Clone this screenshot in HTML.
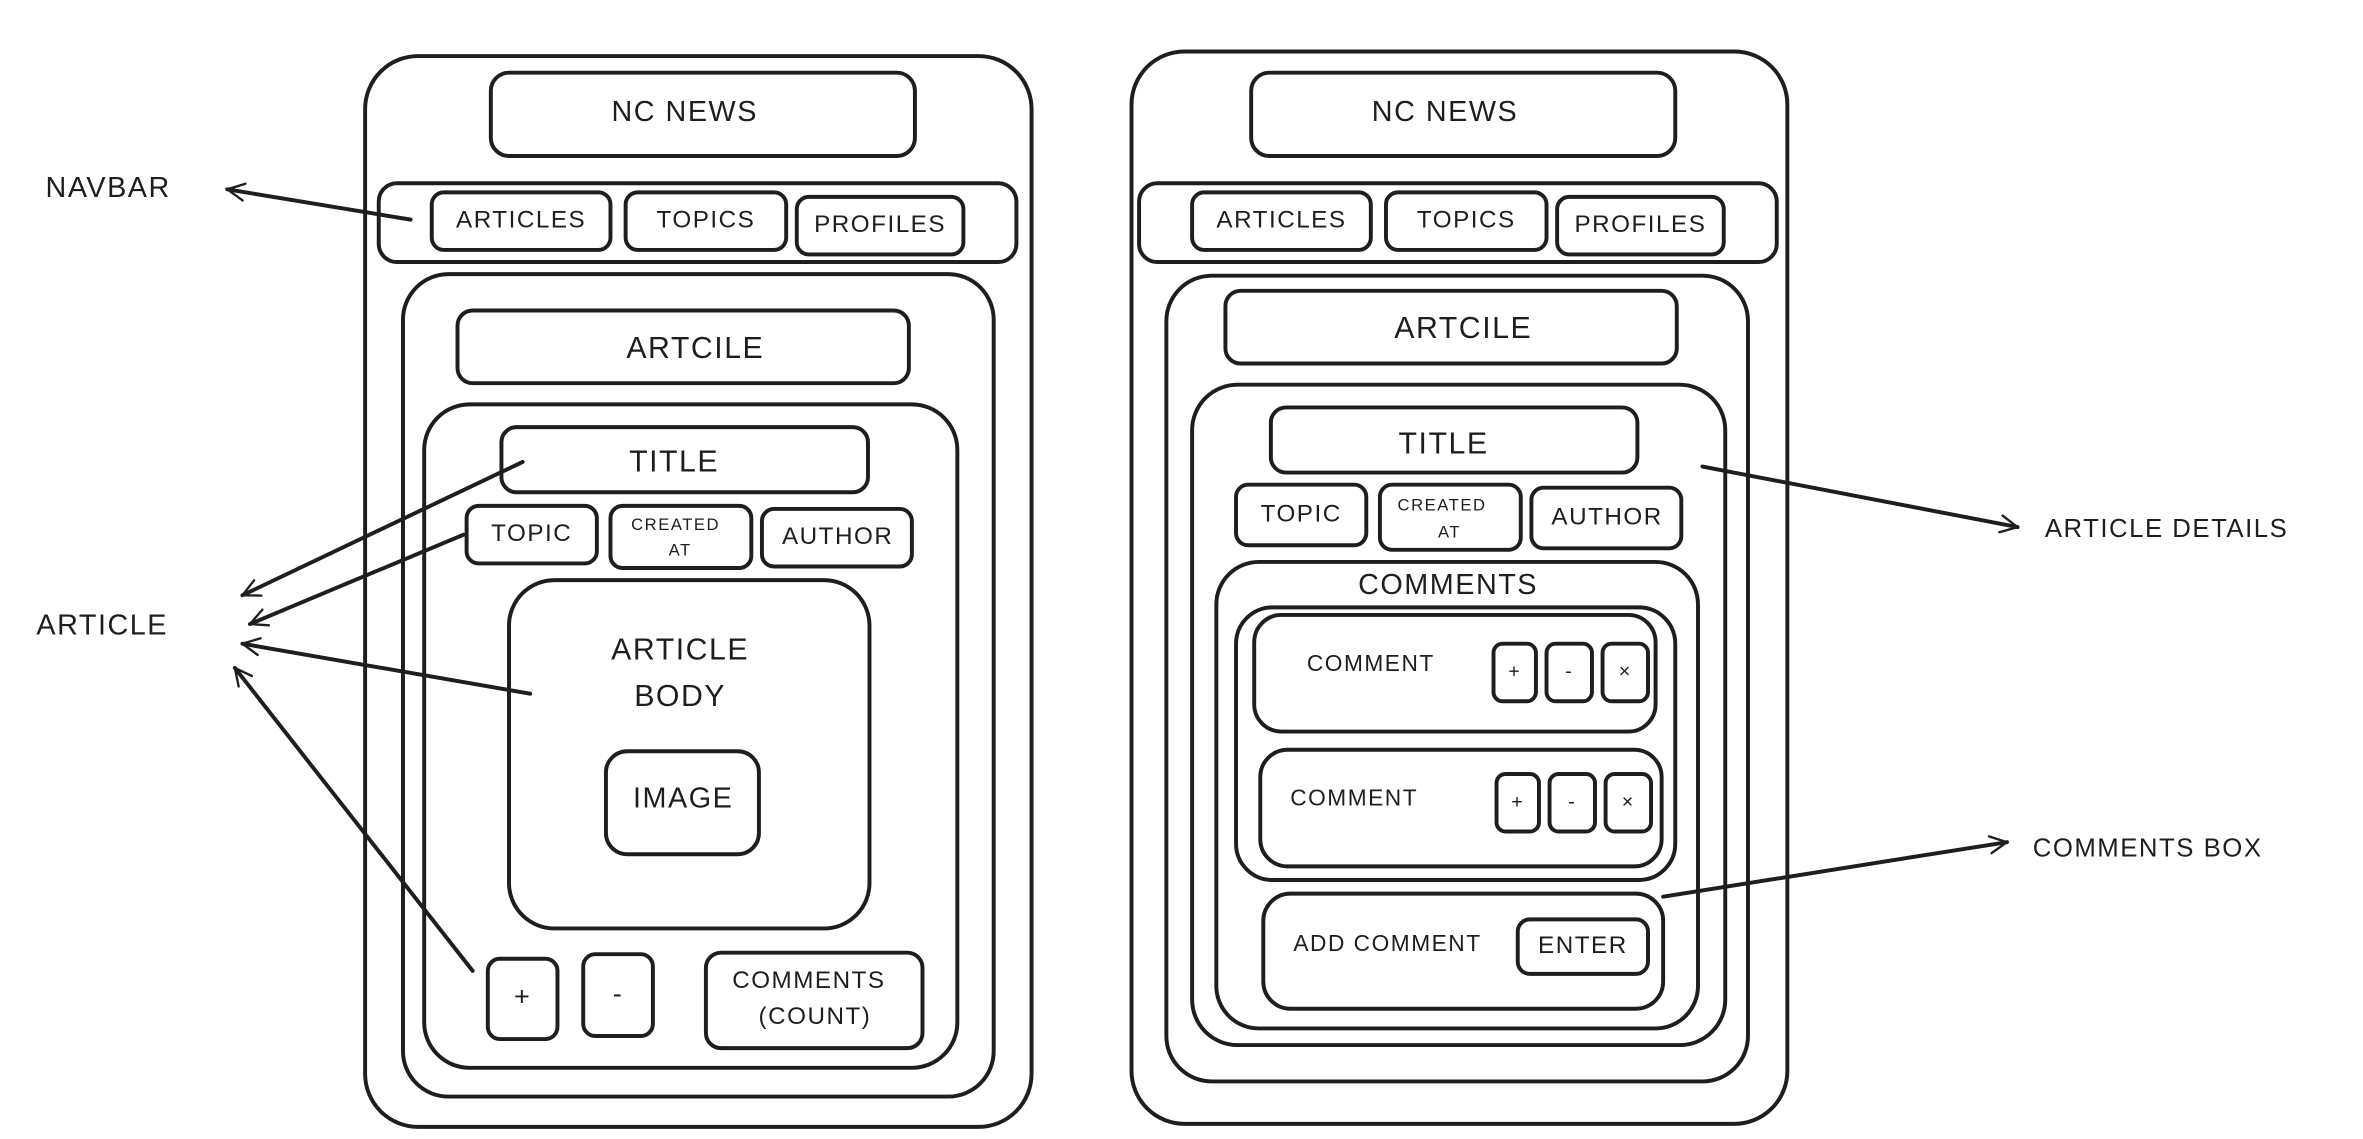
<!DOCTYPE html>
<html><head><meta charset="utf-8"><style>
html,body{margin:0;padding:0;background:#fff;width:2363px;height:1139px;overflow:hidden}
svg{display:block}
text{font-family:"Liberation Sans",sans-serif;fill:#1e1e1e;text-anchor:middle;dominant-baseline:middle;letter-spacing:1px}
text.l{text-anchor:start}
rect{fill:none;stroke:#1e1e1e;stroke-width:2.6}
line,path{stroke:#1e1e1e;stroke-width:2.6;fill:none;stroke-linecap:round}
</style></head><body>
<svg width="2363" height="1139" viewBox="0 0 1560 752" xmlns="http://www.w3.org/2000/svg">
<defs><marker id="a" viewBox="0 0 20 20" refX="18" refY="10" markerWidth="14" markerHeight="14" markerUnits="userSpaceOnUse" orient="auto"><path d="M2 2 L18 10 L2 18" style="stroke-width:2.2"/></marker></defs>
<rect x="241" y="37" width="440" height="707" rx="35"/>
<rect x="324" y="48" width="280" height="55" rx="12"/><text x="452" y="75" font-size="19">NC NEWS</text>
<rect x="250" y="121" width="421" height="52" rx="12"/>
<rect x="285" y="127" width="118" height="38" rx="8"/><text x="344" y="146" font-size="16">ARTICLES</text>
<rect x="413" y="127" width="106" height="38" rx="8"/><text x="466" y="146" font-size="16">TOPICS</text>
<rect x="526" y="130" width="110" height="38" rx="8"/><text x="581" y="149" font-size="16">PROFILES</text>
<rect x="266" y="181" width="390" height="543" rx="30"/>
<rect x="302" y="205" width="298" height="48" rx="10"/><text x="459" y="231" font-size="20">ARTCILE</text>
<rect x="280" y="267" width="352" height="438" rx="30"/>
<rect x="331" y="282" width="242" height="43" rx="10"/><text x="445" y="306" font-size="20">TITLE</text>
<rect x="308" y="334" width="86" height="38" rx="8"/><text x="351" y="353" font-size="16">TOPIC</text>
<rect x="403" y="334" width="93" height="41" rx="8"/><text x="446" y="347" font-size="11">CREATED</text><text x="449" y="364" font-size="11">AT</text>
<rect x="503" y="336" width="99" height="38" rx="8"/><text x="553" y="355" font-size="16">AUTHOR</text>
<rect x="336" y="383" width="238" height="230" rx="30"/>
<text x="449" y="430" font-size="20">ARTICLE</text><text x="449" y="461" font-size="20">BODY</text>
<rect x="400" y="496" width="101" height="68" rx="14"/><text x="451" y="528" font-size="19">IMAGE</text>
<rect x="322" y="633" width="46" height="53" rx="8"/><text x="345" y="659" font-size="18">+</text>
<rect x="385" y="630" width="46" height="54" rx="8"/><text x="408" y="657" font-size="18">-</text>
<rect x="466" y="629" width="143" height="63" rx="10"/><text x="534" y="648" font-size="16">COMMENTS</text><text x="538" y="672" font-size="16">(COUNT)</text>
<rect x="747" y="34" width="433" height="708" rx="35"/>
<rect x="826" y="48" width="280" height="55" rx="12"/><text x="954" y="75" font-size="19">NC NEWS</text>
<rect x="752" y="121" width="421" height="52" rx="12"/>
<rect x="787" y="127" width="118" height="38" rx="8"/><text x="846" y="146" font-size="16">ARTICLES</text>
<rect x="915" y="127" width="106" height="38" rx="8"/><text x="968" y="146" font-size="16">TOPICS</text>
<rect x="1028" y="130" width="110" height="38" rx="8"/><text x="1083" y="149" font-size="16">PROFILES</text>
<rect x="770" y="182" width="384" height="532" rx="30"/>
<rect x="809" y="192" width="298" height="48" rx="10"/><text x="966" y="218" font-size="20">ARTCILE</text>
<rect x="787" y="254" width="352" height="436" rx="30"/>
<rect x="839" y="269" width="242" height="43" rx="10"/><text x="953" y="294" font-size="20">TITLE</text>
<rect x="816" y="320" width="86" height="40" rx="8"/><text x="859" y="340" font-size="16">TOPIC</text>
<rect x="911" y="320" width="93" height="43" rx="8"/><text x="952" y="334" font-size="11">CREATED</text><text x="957" y="352" font-size="11">AT</text>
<rect x="1011" y="322" width="99" height="40" rx="8"/><text x="1061" y="342" font-size="16">AUTHOR</text>
<rect x="803" y="371" width="318" height="308" rx="28"/><text x="956" y="387" font-size="19">COMMENTS</text>
<rect x="816" y="401" width="290" height="180" rx="24"/>
<rect x="828" y="406" width="265" height="77" rx="18"/><text x="905" y="439" font-size="15">COMMENT</text>
<rect x="986" y="425" width="28" height="38" rx="6"/><text x="1000" y="444" font-size="13">+</text>
<rect x="1021" y="425" width="30" height="38" rx="6"/><text x="1036" y="444" font-size="13">-</text>
<rect x="1058" y="425" width="30" height="38" rx="6"/><text x="1073" y="444" font-size="13">×</text>
<rect x="832" y="495" width="265" height="77" rx="18"/><text x="894" y="528" font-size="15">COMMENT</text>
<rect x="988" y="511" width="28" height="38" rx="6"/><text x="1002" y="530" font-size="13">+</text>
<rect x="1023" y="511" width="30" height="38" rx="6"/><text x="1038" y="530" font-size="13">-</text>
<rect x="1060" y="511" width="30" height="38" rx="6"/><text x="1075" y="530" font-size="13">×</text>
<rect x="834" y="590" width="264" height="76" rx="18"/><text x="916" y="624" font-size="15">ADD COMMENT</text>
<rect x="1002" y="607" width="86" height="36" rx="8"/><text x="1045" y="625" font-size="16">ENTER</text>
<text class="l" x="30" y="125" font-size="19">NAVBAR</text>
<text class="l" x="24" y="414" font-size="19">ARTICLE</text>
<text class="l" x="1350" y="350" font-size="17">ARTICLE DETAILS</text>
<text class="l" x="1342" y="561" font-size="17">COMMENTS BOX</text>
<line x1="271" y1="145" x2="150" y2="125" marker-end="url(#a)"/>
<line x1="345" y1="305" x2="160" y2="393" marker-end="url(#a)"/>
<line x1="306" y1="353" x2="165" y2="412" marker-end="url(#a)"/>
<line x1="350" y1="458" x2="160" y2="425" marker-end="url(#a)"/>
<line x1="312" y1="641" x2="155" y2="441" marker-end="url(#a)"/>
<line x1="1124" y1="308" x2="1332" y2="348" marker-end="url(#a)"/>
<line x1="1098" y1="592" x2="1325" y2="556" marker-end="url(#a)"/>
</svg>
</body></html>
